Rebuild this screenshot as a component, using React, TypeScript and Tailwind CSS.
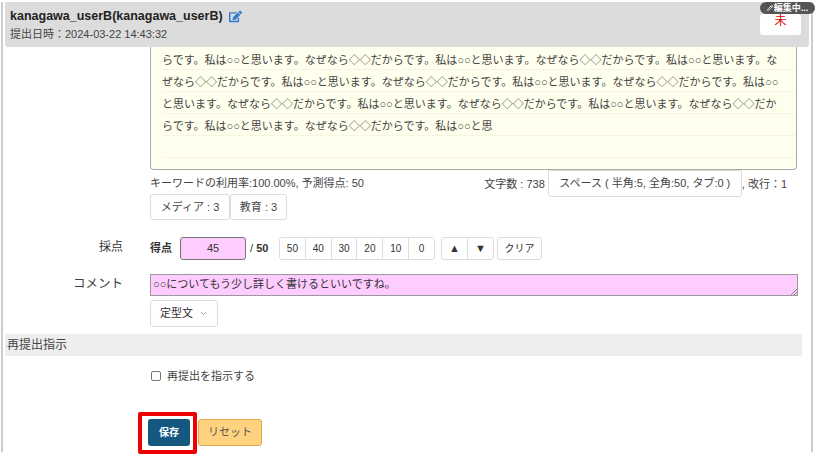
import { FaEdit } from 'react-icons/fa'
import { ChevronDown, Pencil } from 'lucide-react'

const essayLines = [
  'らです。私は○○と思います。なぜなら◇◇だからです。私は○○と思います。なぜなら◇◇だからです。私は○○と思います。な',
  'ぜなら◇◇だからです。私は○○と思います。なぜなら◇◇だからです。私は○○と思います。なぜなら◇◇だからです。私は○○',
  'と思います。なぜなら◇◇だからです。私は○○と思います。なぜなら◇◇だからです。私は○○と思います。なぜなら◇◇だか',
  'らです。私は○○と思います。なぜなら◇◇だからです。私は○○と思',
  '',
]

const quickScores = ['50', '40', '30', '20', '10', '0']

export default function App() {
  return (
    <div className="relative h-[456px] w-[816px] overflow-hidden bg-white font-['Liberation_Sans','Noto_Sans_CJK_JP',sans-serif] text-[#333]">
      <div className="ml-[1px] mr-[3px] h-[450px] border-x-2 border-[#ccc] pl-[2px] pr-[2px]">
        {/* Header */}
        <div className="relative mt-[2px] flex h-[45px] flex-col rounded-b-[3px] bg-[#dcdcdc] pl-[5px] pt-[5px]">
          <div className="flex items-center gap-[6px] text-[12.5px] font-bold leading-[18px] text-[#222]">
            kanagawa_userB(kanagawa_userB)
            <FaEdit className="h-[13px] w-[13px] text-[#2f7bd0]" />
          </div>
          <div className="mt-[2px] text-[11px] leading-[15px] text-[#444]">提出日時：2024-03-22 14:43:32</div>
          <div className="absolute right-[8px] top-[12px] flex h-[21px] w-[41px] justify-center rounded-[3px] bg-white text-[12px] leading-[14px] text-[#d00]">
            未
          </div>
          <div className="absolute right-[-6px] top-0 flex h-[12px] w-[55px] items-center justify-center gap-[1px] rounded-full bg-[#555] text-[9px] font-bold leading-none text-white">
            <Pencil className="h-[6px] w-[6px]" strokeWidth={3} />
            編集中...
          </div>
        </div>

        {/* Essay */}
        <div className="ml-[145px] mr-[12px] h-[123px] rounded-b-[4px] border-x border-b border-[#aaa] bg-[#ffffee] pl-[11px] pt-[1px] text-[11px] leading-[21px] text-[#444]">
          {essayLines.map((line, i) => (
            <div key={i} className="h-[22px] whitespace-nowrap border-b border-[#f5f5e0] pt-[2px]">
              {line}
            </div>
          ))}
        </div>

        {/* Counters */}
        <div className="ml-[145px] mr-[12px] flex h-[24px] items-start text-[11px] text-[#444]">
          <span className="mt-[5px]">キーワードの利用率:100.00%, 予測得点: 50</span>
          <div className="ml-auto mr-[10px] flex items-start">
            <span className="mt-[6px]">文字数 : 738</span>
            <span className="ml-[3px] flex h-[27px] w-[194px] items-center justify-center rounded-b-[3px] border border-[#ddd] bg-white text-[11px] text-[#444]">
              スペース ( 半角:5, 全角:50, タブ:0 )
            </span>
            <span className="mt-[6px]">, 改行：1</span>
          </div>
        </div>

        <div className="ml-[145px] flex h-[26px] text-[11px] text-[#444]">
          <span className="flex w-[80px] items-center justify-center rounded-[3px] border border-[#ddd]">メディア : 3</span>
          <span className="flex w-[57px] items-center justify-center rounded-[3px] border border-[#ddd]">教育 : 3</span>
        </div>

        {/* Score */}
        <div className="mt-[17px] flex h-[23px] items-center">
          <div className="mb-[4px] w-[118px] text-right text-[12px] text-[#333]">採点</div>
          <div className="ml-[27px] flex items-center text-[11px]">
            <span className="w-[30px] font-bold">得点</span>
            <span className="flex h-[23px] w-[66px] items-center justify-center rounded-[3px] border border-[#777] bg-[#fcf] text-[11px]">45</span>
            <span className="ml-[4px] w-[29px]">
              / <b className="text-[11px]">50</b>
            </span>
            <div className="flex h-[23px] w-[156px] rounded-[3px] border border-[#ddd]">
              {quickScores.map(score => (
                <span key={score} className="flex flex-1 items-center justify-center border-l border-[#ddd] text-[10px] first:border-l-0">
                  {score}
                </span>
              ))}
            </div>
            <div className="ml-[6px] flex h-[23px] w-[53px] rounded-[3px] border border-[#ddd] text-[11px]">
              <span className="flex flex-1 items-center justify-center">▲</span>
              <span className="flex flex-1 items-center justify-center border-l border-[#ddd]">▼</span>
            </div>
            <span className="ml-[3px] flex h-[23px] w-[45px] items-center justify-center rounded-[3px] border border-[#ddd] text-[10px]">クリア</span>
          </div>
        </div>

        {/* Comment */}
        <div className="mt-[14px] flex items-start">
          <div className="w-[118px] text-right text-[12.5px] leading-[20px] text-[#444]">コメント</div>
          <div className="ml-[27px]">
            <div className="relative h-[22px] w-[648px] border border-[#999] bg-[#fcf] pl-[2px] text-[11px] leading-[19px] text-[#333]">
              ○○についてもう少し詳しく書けるといいですね。
              <svg className="absolute bottom-0 right-0 h-[7px] w-[7px]" viewBox="0 0 7 7" stroke="#888" fill="none">
                <path d="M1 7 7 1M4 7 7 4" />
              </svg>
            </div>
            <div className="mt-[4px] flex h-[27px] w-[68px] items-center justify-center gap-[6px] rounded-[3px] border border-[#ddd] text-[11px]">
              定型文
              <ChevronDown className="h-[9px] w-[9px] text-[#777]" />
            </div>
          </div>
        </div>

        {/* Resubmit */}
        <div className="mr-[7px] mt-[7px] h-[22px] bg-[#eee] pl-[2px] text-[12px] leading-[22px] text-[#444]">再提出指示</div>
        <label className="ml-[146px] mt-[11px] flex h-[18px] items-center gap-[6px] text-[11px] text-[#444]">
          <span className="h-[10px] w-[10px] rounded-[2px] border border-[#777]" />
          再提出を指示する
        </label>

        {/* Actions */}
        <div className="ml-[143px] mt-[34px] flex items-center gap-[8px]">
          <button className="h-[27px] w-[42px] rounded-[3px] bg-[#14587f] text-[10px] font-bold text-white">保存</button>
          <button className="h-[27px] w-[64px] rounded-[3px] border border-[#e0a850] bg-[#ffd27f] text-[11px] text-[#555]">リセット</button>
        </div>
      </div>

      {/* Callout around the save button */}
      <div className="absolute left-[138px] top-[412px] h-[42px] w-[59px] rounded-[2px] border-[4px] border-[#ee0000]" />
    </div>
  )
}
